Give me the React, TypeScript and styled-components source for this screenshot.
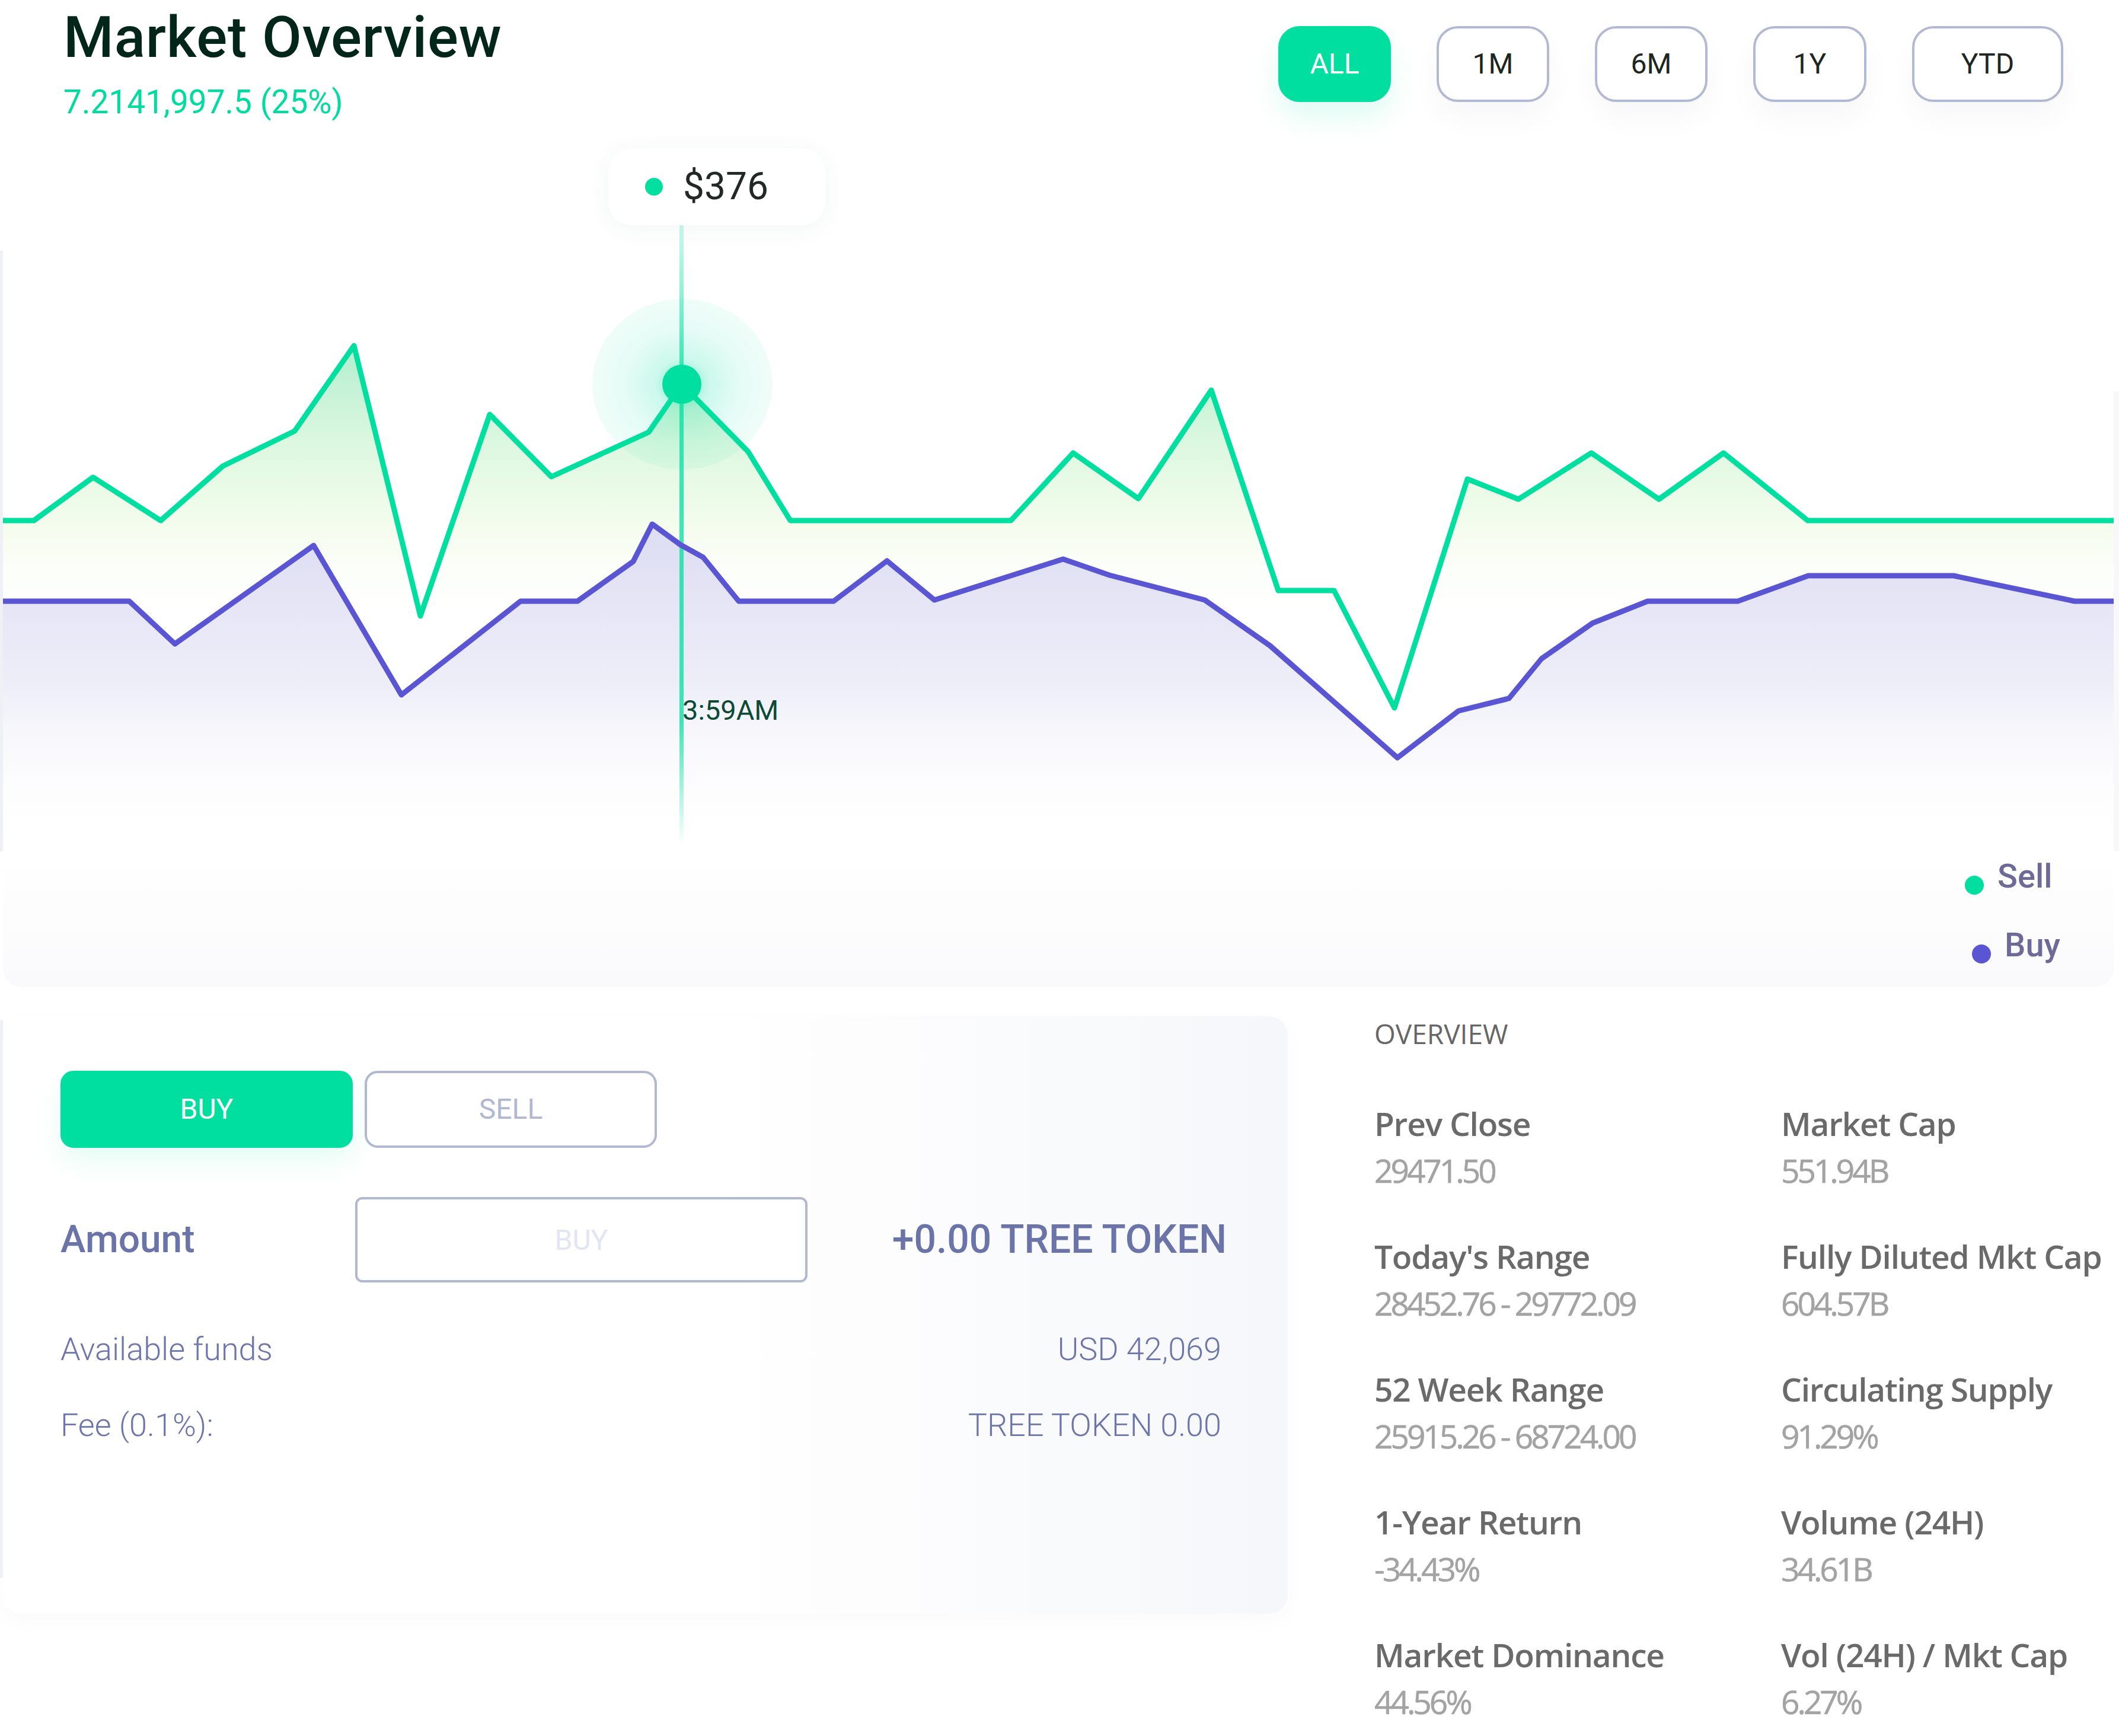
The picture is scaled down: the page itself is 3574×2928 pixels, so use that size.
import React from 'react';
import styled, { createGlobalStyle } from 'styled-components';

const GlobalStyle = createGlobalStyle`
  html, body { margin: 0; padding: 0; background: #ffffff; }
  body { width: 3574px; height: 2928px; overflow: hidden; font-family: Roboto, "Liberation Sans", sans-serif; }
  * { box-sizing: border-box; }
`;

const Page = styled.div`
  width: 3574px;
  height: 2928px;
  overflow: hidden;
  background: #ffffff;
`;

const Header = styled.header`
  display: flex;
  justify-content: space-between;
  align-items: flex-start;
  height: 376px;
  padding: 15px 94px 0 107px;
`;

const TitleBlock = styled.div`
  display: flex;
  flex-direction: column;
  gap: 32px;
`;

const Title = styled.h1`
  margin: 0;
  font: 500 97px/97px Roboto, "Liberation Sans", sans-serif;
  letter-spacing: 0.8px;
  color: #03261b;
`;

const Change = styled.div`
  font: 400 55px/56px Roboto, "Liberation Sans", sans-serif;
  color: #00dba0;
`;

const RangeGroup = styled.div`
  display: flex;
  gap: 77px;
  margin-top: 29px;
`;

const RangeButton = styled.button<{ $active?: boolean; $w: number }>`
  width: ${(p) => p.$w}px;
  height: 128px;
  padding: 0;
  border-radius: 36px;
  border: 4px solid ${(p) => (p.$active ? '#00df9f' : '#b3b9d2')};
  background: ${(p) => (p.$active ? '#00df9f' : '#ffffff')};
  color: ${(p) => (p.$active ? '#ffffff' : '#1e2622')};
  font: 400 48px/1 Roboto, "Liberation Sans", sans-serif;
  box-shadow: ${(p) =>
    p.$active ? '0 26px 50px rgba(0, 223, 159, 0.13)' : '0 26px 50px rgba(40, 40, 90, 0.035)'};
`;

const ChartArea = styled.div`
  position: relative;
  height: 1060px;
  &::before {
    content: '';
    position: absolute;
    left: 0;
    top: 47px;
    bottom: 0;
    width: 5px;
    background: #eff0f5;
  }
  &::after {
    content: '';
    position: absolute;
    right: 0;
    top: 284px;
    bottom: 0;
    width: 9px;
    background: #f8f8fb;
  }
`;

const ChartSvg = styled.svg`
  display: block;
  width: 3574px;
  height: 1060px;
`;

const Tooltip = styled.div`
  position: absolute;
  left: 1026px;
  top: -126px;
  width: 366px;
  height: 130px;
  border-radius: 40px;
  background: #ffffff;
  box-shadow: 0 6px 40px rgba(40, 60, 90, 0.06);
  display: flex;
  align-items: center;
  gap: 34px;
  padding-left: 62px;
`;

const TooltipDot = styled.span`
  width: 30px;
  height: 30px;
  border-radius: 50%;
  background: #00df9f;
  flex: none;
`;

const TooltipValue = styled.span`
  font: 400 64px/64px Roboto, "Liberation Sans", sans-serif;
  color: #222826;
`;

const LegendBand = styled.div`
  height: 229px;
  margin: 0 9px 0 5px;
  border-radius: 0 0 32px 32px;
  background: linear-gradient(180deg, #ffffff 0%, #fafafc 100%);
  display: flex;
  justify-content: flex-end;
  padding: 14px 90px 0 0;
`;

const Legend = styled.div`
  display: flex;
  flex-direction: column;
  gap: 57px;
`;

const LegendItem = styled.div<{ $offset?: number }>`
  display: flex;
  align-items: flex-start;
  gap: 23px;
  margin-left: ${(p) => p.$offset ?? 0}px;
  font: 500 56px/56px Roboto, "Liberation Sans", sans-serif;
  color: #6e6a98;
`;

const LegendDot = styled.span<{ $color: string }>`
  width: 32px;
  height: 32px;
  margin-top: 27px;
  border-radius: 50%;
  background: ${(p) => p.$color};
  flex: none;
`;

const Bottom = styled.section`
  display: grid;
  grid-template-columns: 2167px 1fr;
  column-gap: 146px;
  padding-left: 5px;
  margin-top: 49px;
`;

const TradeCard = styled.div`
  position: relative;
  height: 1008px;
  border-radius: 32px;
  background: linear-gradient(90deg, #ffffff 0%, #ffffff 55%, #f6f7fa 100%);
  box-shadow: 0 12px 40px rgba(30, 40, 80, 0.025);
  padding: 92px 103px 0 97px;
  &::before {
    content: '';
    position: absolute;
    left: -5px;
    top: 6px;
    bottom: 61px;
    width: 5px;
    background: #eff0f5;
  }
`;

const SideToggle = styled.div`
  display: flex;
  gap: 20px;
`;

const SideButton = styled.button<{ $active?: boolean }>`
  width: 493px;
  height: 130px;
  padding: 0;
  border-radius: 22px;
  border: 4px solid ${(p) => (p.$active ? '#00df9f' : '#b1b8d1')};
  background: ${(p) => (p.$active ? '#00df9f' : '#ffffff')};
  color: ${(p) => (p.$active ? '#ffffff' : '#b1b8d1')};
  font: 400 48px/1 Roboto, "Liberation Sans", sans-serif;
  box-shadow: ${(p) => (p.$active ? '0 24px 44px rgba(0, 223, 159, 0.1)' : 'none')};
`;

const AmountRow = styled.div`
  display: grid;
  grid-template-columns: 497px 763px 1fr;
  align-items: center;
  margin-top: 83px;
  height: 144px;
`;

const AmountLabel = styled.span`
  font: 500 64px/64px Roboto, "Liberation Sans", sans-serif;
  color: #6b74a8;
`;

const AmountInput = styled.input`
  width: 763px;
  height: 144px;
  border: 4px solid #b1b8d1;
  border-radius: 12px;
  background: #ffffff;
  text-align: center;
  font: 400 48px/1 Roboto, "Liberation Sans", sans-serif;
  color: #6b74a8;
  outline: none;
  &::placeholder {
    color: #e3e6f2;
  }
`;

const TokenTotal = styled.span`
  justify-self: end;
  font: 500 66px/66px Roboto, "Liberation Sans", sans-serif;
  color: #6b74a8;
  white-space: nowrap;
`;

const FundsList = styled.div`
  display: flex;
  flex-direction: column;
  gap: 74px;
  margin-top: 86px;
  padding-right: 9px;
`;

const FundsRow = styled.div`
  display: flex;
  justify-content: space-between;
  font: 300 54px/54px Roboto, "Liberation Sans", sans-serif;
  color: #6d76ab;
`;

const Overview = styled.div`
  padding-top: 6px;
`;

const OverviewTitle = styled.div`
  font: 400 46px/46px "Open Sans", "Liberation Sans", sans-serif;
  color: #666666;
`;

const StatsGrid = styled.div`
  display: grid;
  grid-template-columns: 686px 1fr;
  row-gap: 90px;
  margin-top: 101px;
`;

const Stat = styled.div`
  display: flex;
  flex-direction: column;
  gap: 24px;
`;

const StatLabel = styled.div`
  font: 600 55px/55px "Open Sans", "Liberation Sans", sans-serif;
  color: #6a6a6a;
  letter-spacing: -1.2px;
  white-space: nowrap;
`;

const StatValue = styled.div`
  font: 400 55px/55px "Open Sans", "Liberation Sans", sans-serif;
  color: #a3a3a3;
  letter-spacing: -4px;
  -webkit-text-stroke: 0.6px #a3a3a3;
  white-space: nowrap;
`;

const GREEN = '#00df9f';
const PURPLE = '#5a55d2';

const sellPts: [number, number][] = [
  [5, 878], [57, 878], [157, 805], [271, 878], [376, 786], [497, 727], [597, 583],
  [709, 1039], [826, 699], [930, 804], [1094, 729], [1150, 648], [1262, 762],
  [1333, 878], [1705, 878], [1810, 764], [1920, 841], [2043, 658], [2156, 996],
  [2250, 996], [2352, 1194], [2475, 808], [2561, 842], [2684, 764], [2798, 842],
  [2907, 764], [3049, 878], [3565, 878],
];

const buyPts: [number, number][] = [
  [5, 1014], [218, 1014], [295, 1086], [529, 920], [677, 1172], [878, 1014],
  [974, 1014], [1068, 947], [1100, 884], [1148, 919], [1186, 940], [1246, 1014],
  [1406, 1014], [1496, 946], [1576, 1012], [1793, 943], [1871, 970], [2032, 1012],
  [2142, 1089], [2357, 1278], [2460, 1199], [2545, 1178], [2600, 1111], [2686, 1051],
  [2779, 1014], [2931, 1014], [3050, 971], [3295, 971], [3499, 1014], [3565, 1014],
];

const toLine = (pts: [number, number][]) => pts.map(([x, y]) => `${x},${y}`).join(' ');
const toArea = (pts: [number, number][]) =>
  `${toLine(pts)} ${pts[pts.length - 1][0]},1436 ${pts[0][0]},1436`;

const ranges = [
  { label: 'ALL', w: 190, active: true },
  { label: '1M', w: 190 },
  { label: '6M', w: 190 },
  { label: '1Y', w: 191 },
  { label: 'YTD', w: 255 },
];

const stats = [
  ['Prev Close', '29471.50'],
  ['Market Cap', '551.94B'],
  ["Today's Range", '28452.76 - 29772.09'],
  ['Fully Diluted Mkt Cap', '604.57B'],
  ['52 Week Range', '25915.26 - 68724.00'],
  ['Circulating Supply', '91.29%'],
  ['1-Year Return', '-34.43%'],
  ['Volume (24H)', '34.61B'],
  ['Market Dominance', '44.56%'],
  ['Vol (24H) / Mkt Cap', '6.27%'],
];

function PriceChart() {
  return (
    <ChartSvg viewBox="0 376 3574 1060">
      <defs>
        <linearGradient id="sellFill" gradientUnits="userSpaceOnUse" x1="0" y1="580" x2="0" y2="1060">
          <stop offset="0" stopColor="#b2eecf" stopOpacity="1" />
          <stop offset="0.35" stopColor="#daf7de" stopOpacity="0.95" />
          <stop offset="0.65" stopColor="#f2fce9" stopOpacity="0.8" />
          <stop offset="1" stopColor="#ffffff" stopOpacity="0" />
        </linearGradient>
        <linearGradient id="buyFill" gradientUnits="userSpaceOnUse" x1="0" y1="880" x2="0" y2="1430">
          <stop offset="0" stopColor="#dcdcf3" stopOpacity="1" />
          <stop offset="0.5" stopColor="#ececf8" stopOpacity="0.9" />
          <stop offset="1" stopColor="#ffffff" stopOpacity="0" />
        </linearGradient>
        <radialGradient id="halo" cx="0.5" cy="0.5" r="0.5">
          <stop offset="0" stopColor={GREEN} stopOpacity="0.55" />
          <stop offset="0.3" stopColor={GREEN} stopOpacity="0.2" />
          <stop offset="0.65" stopColor={GREEN} stopOpacity="0.1" />
          <stop offset="1" stopColor={GREEN} stopOpacity="0.06" />
        </radialGradient>
        <linearGradient id="cursor" gradientUnits="userSpaceOnUse" x1="0" y1="380" x2="0" y2="1425">
          <stop offset="0" stopColor={GREEN} stopOpacity="0.2" />
          <stop offset="0.25" stopColor={GREEN} stopOpacity="0.75" />
          <stop offset="0.8" stopColor={GREEN} stopOpacity="0.75" />
          <stop offset="1" stopColor={GREEN} stopOpacity="0" />
        </linearGradient>
      </defs>
      <polygon points={toArea(sellPts)} fill="url(#sellFill)" />
      <polygon points={toArea(buyPts)} fill="url(#buyFill)" />
      <ellipse cx="1151" cy="648" rx="152" ry="144" fill="url(#halo)" />
      <rect x="1146" y="380" width="7" height="1045" fill="url(#cursor)" />
      <polyline points={toLine(sellPts)} fill="none" stroke={GREEN} strokeWidth="9" strokeLinejoin="round" />
      <polyline points={toLine(buyPts)} fill="none" stroke={PURPLE} strokeWidth="9" strokeLinejoin="round" />
      <circle cx="1150" cy="648" r="33" fill={GREEN} />
      <text x="1151" y="1214" fontFamily="Roboto, 'Liberation Sans', sans-serif" fontSize="47" fill="#0d4a35">
        3:59AM
      </text>
    </ChartSvg>
  );
}

export default function App() {
  return (
    <Page>
      <GlobalStyle />
      <Header>
        <TitleBlock>
          <Title>Market Overview</Title>
          <Change>7.2141,997.5 (25%)</Change>
        </TitleBlock>
        <RangeGroup>
          {ranges.map((r) => (
            <RangeButton key={r.label} $active={r.active} $w={r.w}>
              {r.label}
            </RangeButton>
          ))}
        </RangeGroup>
      </Header>

      <ChartArea>
        <PriceChart />
        <Tooltip>
          <TooltipDot />
          <TooltipValue>$376</TooltipValue>
        </Tooltip>
      </ChartArea>

      <LegendBand>
        <Legend>
          <LegendItem>
            <LegendDot $color={GREEN} />
            Sell
          </LegendItem>
          <LegendItem $offset={12}>
            <LegendDot $color={PURPLE} />
            Buy
          </LegendItem>
        </Legend>
      </LegendBand>

      <Bottom>
        <TradeCard>
          <SideToggle>
            <SideButton $active>BUY</SideButton>
            <SideButton>SELL</SideButton>
          </SideToggle>
          <AmountRow>
            <AmountLabel>Amount</AmountLabel>
            <AmountInput placeholder="BUY" />
            <TokenTotal>+0.00 TREE TOKEN</TokenTotal>
          </AmountRow>
          <FundsList>
            <FundsRow>
              <span>Available funds</span>
              <span>USD 42,069</span>
            </FundsRow>
            <FundsRow>
              <span>Fee (0.1%):</span>
              <span>TREE TOKEN 0.00</span>
            </FundsRow>
          </FundsList>
        </TradeCard>

        <Overview>
          <OverviewTitle>OVERVIEW</OverviewTitle>
          <StatsGrid>
            {stats.map(([label, value]) => (
              <Stat key={label}>
                <StatLabel>{label}</StatLabel>
                <StatValue>{value}</StatValue>
              </Stat>
            ))}
          </StatsGrid>
        </Overview>
      </Bottom>
    </Page>
  );
}
